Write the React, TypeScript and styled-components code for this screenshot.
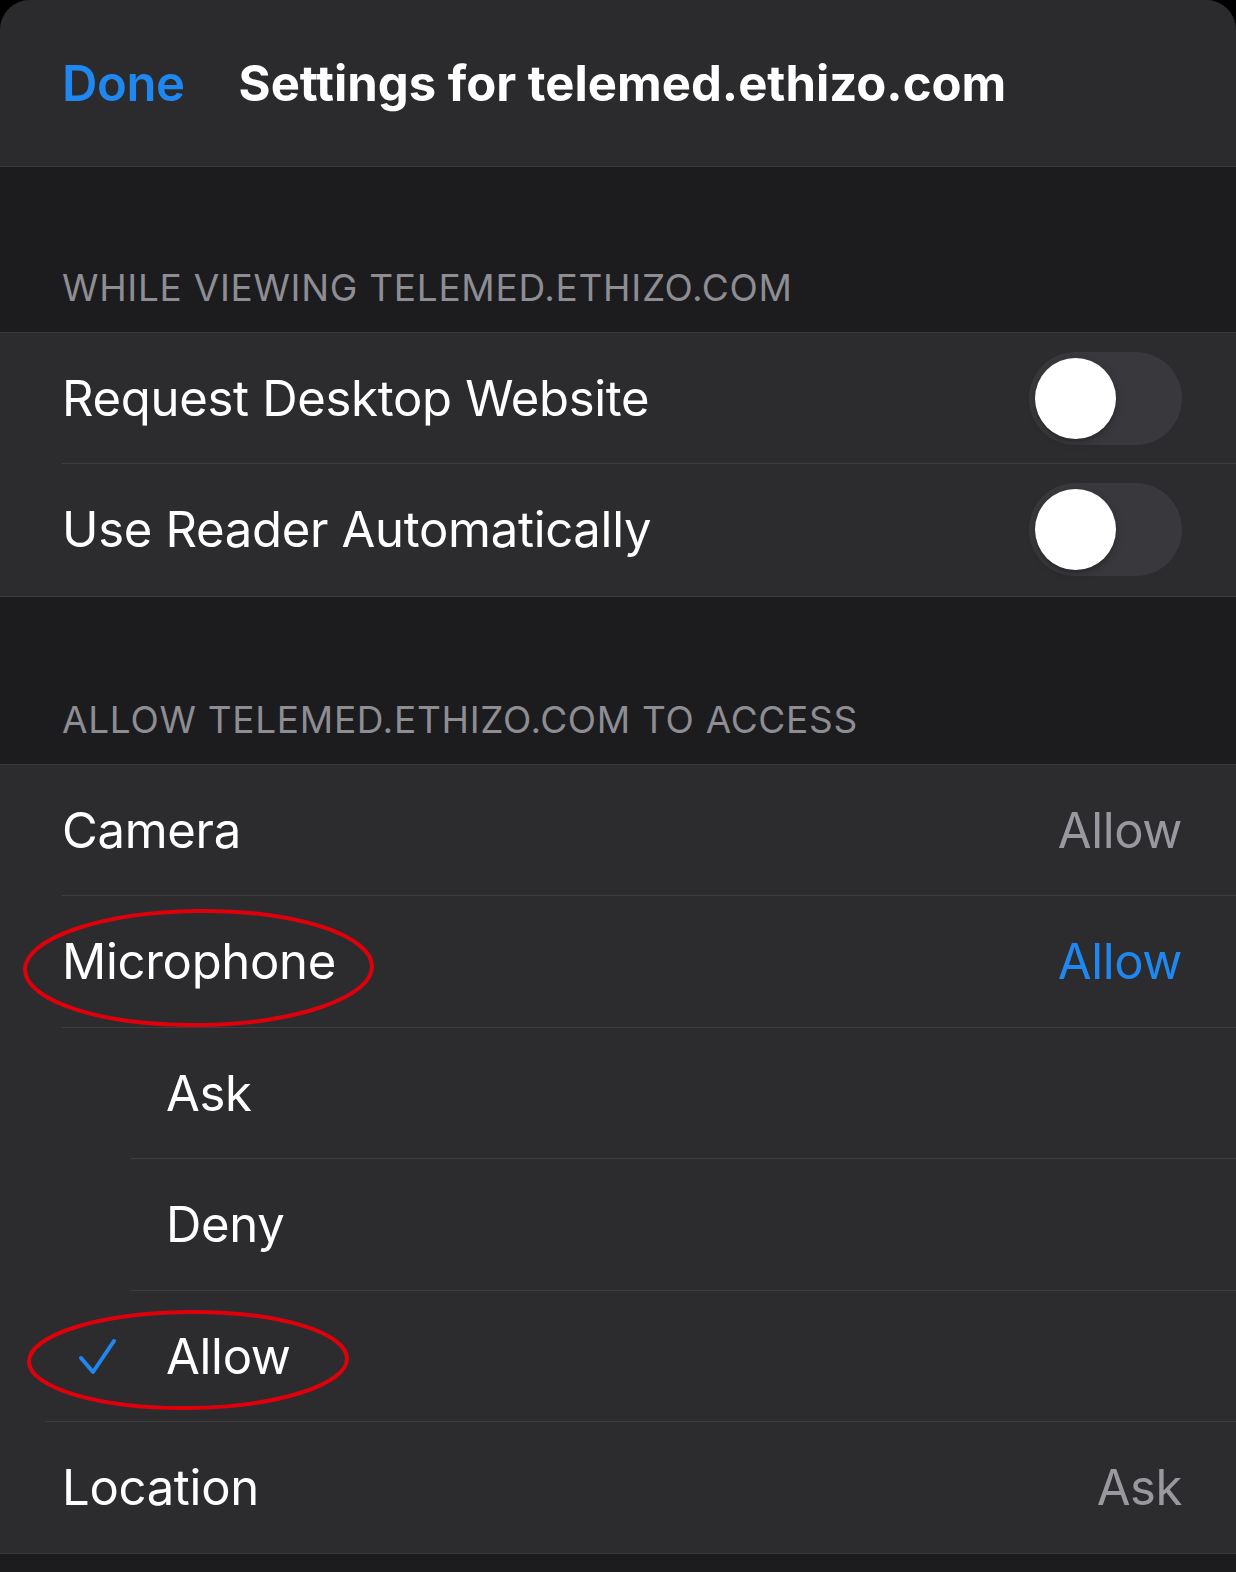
import React from 'react';
import styled, { createGlobalStyle } from 'styled-components';

const GlobalStyle = createGlobalStyle`
  html, body {
    margin: 0;
    padding: 0;
    background: #000;
  }
  body {
    font-family: Inter, "Noto Sans", "Liberation Sans", sans-serif;
    -webkit-font-smoothing: antialiased;
  }
`;

const Sheet = styled.div`
  width: 1236px;
  min-height: 1572px;
  background: #1c1c1e;
  border-radius: 30px 30px 0 0;
  overflow: hidden;
`;

const NavBar = styled.header`
  height: 166px;
  display: flex;
  align-items: center;
  gap: 54px;
  padding: 0 62px;
  background: #2b2b2d;
  border-bottom: 1px solid #3a3a3c;
`;

const DoneButton = styled.button`
  border: 0;
  padding: 0;
  background: none;
  font-family: inherit;
  font-size: 49px;
  font-weight: 600;
  color: #1f87f0;
  letter-spacing: -0.4px;
`;

const Title = styled.h1`
  margin: 0;
  font-size: 49px;
  font-weight: 700;
  color: #fff;
  letter-spacing: 0;
`;

const SectionHeader = styled.div<{ $height: number }>`
  height: ${(p) => p.$height}px;
  display: flex;
  align-items: flex-end;
  padding: 0 62px 22px;
  box-sizing: border-box;
  font-size: 37px;
  color: #8d8d93;
  text-transform: uppercase;
  letter-spacing: 0.7px;
`;

const Group = styled.div`
  background: #2c2c2e;
  border-top: 1px solid #3a3a3c;
  border-bottom: 1px solid #3a3a3c;
`;

const Row = styled.div<{ $height: number; $inset?: number; $last?: boolean }>`
  position: relative;
  height: ${(p) => p.$height}px;
  display: flex;
  align-items: center;
  padding: 0 54px 0 62px;
  box-sizing: border-box;

  &::after {
    content: '';
    display: ${(p) => (p.$last ? 'none' : 'block')};
    position: absolute;
    left: ${(p) => p.$inset ?? 62}px;
    right: 0;
    bottom: 0;
    height: 1px;
    background: #3d3d40;
  }
`;

const Label = styled.span<{ $indent?: boolean }>`
  flex: 1;
  font-size: 49px;
  color: #fff;
  letter-spacing: -0.3px;
  padding-left: ${(p) => (p.$indent ? 104 : 0)}px;
`;

const Value = styled.span<{ $active?: boolean }>`
  font-size: 49px;
  letter-spacing: -0.4px;
  color: ${(p) => (p.$active ? '#1f87f0' : '#98989e')};
`;

const Track = styled.div`
  width: 153px;
  height: 93px;
  border-radius: 47px;
  background: #39393d;
  display: flex;
  align-items: center;
  padding: 0 6px;
  box-sizing: border-box;
`;

const Knob = styled.div`
  width: 81px;
  height: 81px;
  border-radius: 50%;
  background: #fff;
  box-shadow: 0 3px 8px rgba(0, 0, 0, 0.25), 0 3px 1px rgba(0, 0, 0, 0.06);
`;

const CheckSlot = styled.svg`
  position: absolute;
  left: 78px;
  top: 50%;
  margin-top: -18px;
`;

const Ring = styled.svg`
  position: absolute;
  pointer-events: none;
`;

const Toggle = () => (
  <Track>
    <Knob />
  </Track>
);

const Mark = ({ left, top, w, h }: { left: number; top: number; w: number; h: number }) => (
  <Ring width={w + 8} height={h + 8} style={{ left: left - 4, top: top - 4 }}>
    <ellipse
      cx={(w + 8) / 2}
      cy={(h + 8) / 2}
      rx={w / 2}
      ry={h / 2}
      fill="none"
      stroke="#e0000c"
      strokeWidth="4"
      transform={`rotate(-0.6 ${(w + 8) / 2} ${(h + 8) / 2})`}
    />
  </Ring>
);

export default function App() {
  return (
    <>
      <GlobalStyle />
      <Sheet>
        <NavBar>
          <DoneButton>Done</DoneButton>
          <Title>Settings for telemed.ethizo.com</Title>
        </NavBar>

        <SectionHeader $height={165}>While viewing telemed.ethizo.com</SectionHeader>
        <Group>
          <Row $height={131}>
            <Label>Request Desktop Website</Label>
            <Toggle />
          </Row>
          <Row $height={131.5} $last>
            <Label>Use Reader Automatically</Label>
            <Toggle />
          </Row>
        </Group>

        <SectionHeader $height={167}>Allow telemed.ethizo.com to access</SectionHeader>
        <Group>
          <Row $height={131.5}>
            <Label>Camera</Label>
            <Value>Allow</Value>
          </Row>
          <Row $height={131.5}>
            <Label>Microphone</Label>
            <Value $active>Allow</Value>
            <Mark left={25} top={15} w={347} h={114} />
          </Row>
          <Row $height={131.5} $inset={131}>
            <Label $indent>Ask</Label>
          </Row>
          <Row $height={131.5} $inset={131}>
            <Label $indent>Deny</Label>
          </Row>
          <Row $height={131.5} $inset={45}>
            <CheckSlot width="40" height="38" viewBox="0 0 40 38">
              <path
                d="M3 20 L15 34 L36 3"
                fill="none"
                stroke="#1f87f0"
                strokeWidth="4"
                strokeLinecap="round"
                strokeLinejoin="round"
              />
            </CheckSlot>
            <Label $indent>Allow</Label>
            <Mark left={29} top={21} w={318} h={96} />
          </Row>
          <Row $height={131.3} $last>
            <Label>Location</Label>
            <Value>Ask</Value>
          </Row>
        </Group>
      </Sheet>
    </>
  );
}
